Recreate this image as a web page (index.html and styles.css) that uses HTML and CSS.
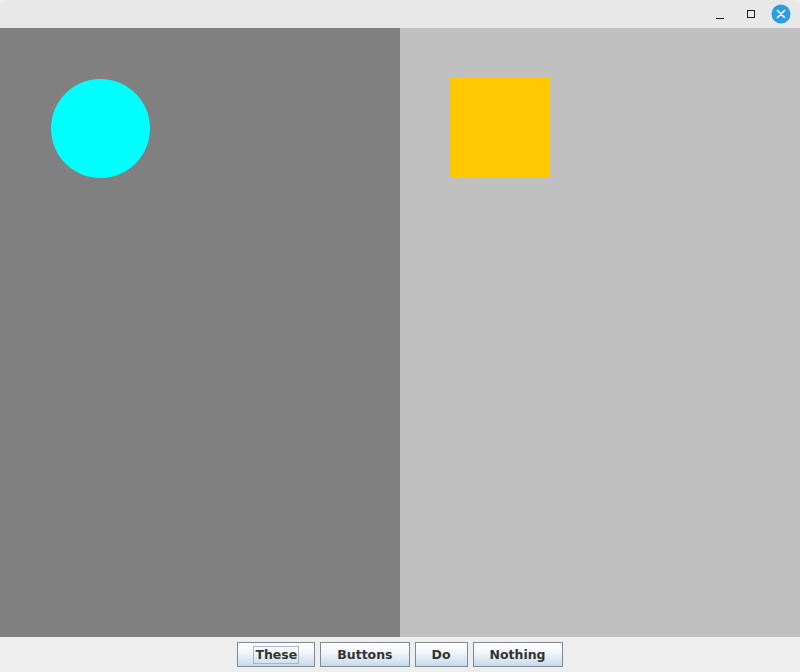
FILE: index.html
```html
<!DOCTYPE html>
<html>
<head>
<meta charset="utf-8">
<link rel="stylesheet" href="styles.css">
</head>
<body>
<div class="window">
  <div class="titlebar">
    <div class="controls">
      <svg class="ctl" width="16" height="16" viewBox="0 0 16 16"><line x1="4" y1="12.5" x2="12" y2="12.5" stroke="#222" stroke-width="1"/></svg>
      <svg class="ctl max" width="16" height="16" viewBox="0 0 16 16"><rect x="4.5" y="4.5" width="7" height="7" fill="none" stroke="#222" stroke-width="1"/></svg>
      <svg class="ctl close" width="20" height="20" viewBox="0 0 20 20"><circle cx="10" cy="10" r="9.5" fill="#2a9de4"/><path d="M6.5 6.5 L13.5 13.5 M13.5 6.5 L6.5 13.5" stroke="#fff" stroke-width="1.6" stroke-linecap="round"/></svg>
    </div>
  </div>
  <div class="main">
    <div class="pane dark"><div class="circle"></div></div>
    <div class="pane light"><div class="square"></div></div>
  </div>
  <div class="bottombar">
    <button class="btn"><span class="focus">These</span></button>
    <button class="btn">Buttons</button>
    <button class="btn">Do</button>
    <button class="btn">Nothing</button>
  </div>
</div>
</body>
</html>
```

FILE: styles.css
```css
html, body {
  margin: 0;
  padding: 0;
  width: 800px;
  height: 672px;
  overflow: hidden;
}
.window {
  display: flex;
  flex-direction: column;
  width: 800px;
  height: 672px;
  background: #eeeeee;
}
.titlebar {
  height: 28px;
  background: #e8e8e8;
  border-radius: 6px 6px 0 0;
  display: flex;
  justify-content: flex-end;
  align-items: center;
}
.controls {
  display: flex;
  align-items: center;
  gap: 15px;
  padding-right: 9px;
}
.ctl { display: block; }
.max { margin-right: -3px; }
.main {
  height: 609px;
  display: grid;
  grid-template-columns: 400px 400px;
}
.pane {
  padding: 50px;
}
.dark {
  background: #808080;
  padding: 51px 0 0 51px;
}
.light { background: #c0c0c0; }
.circle {
  width: 99px;
  height: 99px;
  border-radius: 50%;
  background: #00ffff;
}
.square {
  width: 100px;
  height: 100px;
  background: #ffc800;
}
.bottombar {
  height: 35px;
  box-sizing: border-box;
  padding-top: 5px;
  display: flex;
  justify-content: center;
  align-items: flex-start;
  gap: 5px;
}
.btn {
  height: 25px;
  box-sizing: border-box;
  padding: 0 16px;
  border: 1px solid #7a8a99;
  border-radius: 0;
  background: linear-gradient(#ffffff 0%, #f2f6fa 40%, #dde8f3 70%, #c9d9ea 100%);
  font-family: "DejaVu Sans", sans-serif;
  font-weight: bold;
  font-size: 12.5px;
  color: #333333;
  line-height: 17px;
  margin: 0;
}
.focus {
  display: inline-block;
  outline: 1px solid #a3b8cc;
  padding: 0 1px;
  line-height: 16px;
}
```
